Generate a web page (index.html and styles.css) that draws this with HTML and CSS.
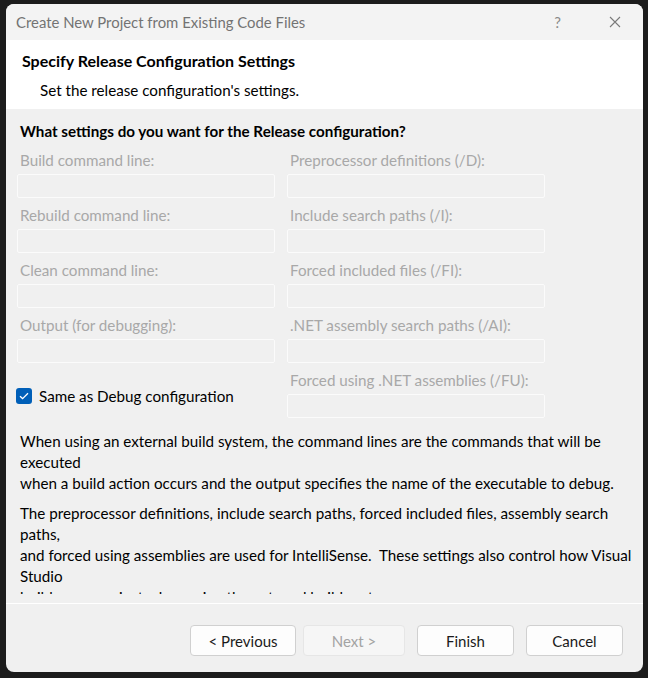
FILE: index.html
```html
<!DOCTYPE html>
<html>
<head>
<meta charset="utf-8">
<link rel="stylesheet" href="styles.css">
</head>
<body>
<div class="window">
  <div class="titlebar">
    <span class="title">Create New Project from Existing Code Files</span>
    <span class="help">?</span>
    <svg class="close" width="12" height="12" viewBox="0 0 12 12"><path d="M1 1L11 11M11 1L1 11" stroke="#7a7a7a" stroke-width="1.1" fill="none"/></svg>
  </div>
  <div class="header">
    <div class="h-title">Specify Release Configuration Settings</div>
    <div class="h-sub">Set the release configuration's settings.</div>
  </div>
  <div class="body">
    <div class="question">What settings do you want for the Release configuration?</div>
    <div class="grid">
      <div class="field"><div class="label">Build command line:</div><div class="input"></div></div>
      <div class="field"><div class="label">Preprocessor definitions (/D):</div><div class="input"></div></div>
      <div class="field"><div class="label">Rebuild command line:</div><div class="input"></div></div>
      <div class="field"><div class="label">Include search paths (/I):</div><div class="input"></div></div>
      <div class="field"><div class="label">Clean command line:</div><div class="input"></div></div>
      <div class="field"><div class="label">Forced included files (/FI):</div><div class="input"></div></div>
      <div class="field"><div class="label">Output (for debugging):</div><div class="input"></div></div>
      <div class="field"><div class="label">.NET assembly search paths (/AI):</div><div class="input"></div></div>
      <div class="check-cell">
        <span class="checkbox"><svg width="10" height="8" viewBox="0 0 10 8"><path d="M1 4.2L3.6 6.6L9 1.2" stroke="#fff" stroke-width="1.3" fill="none"/></svg></span>
        <span class="check-label">Same as Debug configuration</span>
      </div>
      <div class="field"><div class="label">Forced using .NET assemblies (/FU):</div><div class="input"></div></div>
    </div>
    <p class="para">When using an external build system, the command lines are the commands that will be<br>executed<br>when a build action occurs and the output specifies the name of the executable to debug.</p>
    <p class="para">The preprocessor definitions, include search paths, forced included files, assembly search<br>paths,<br>and forced using assemblies are used for IntelliSense.&nbsp; These settings also control how Visual<br>Studio<br>builds your project when using the external build system.</p>
  </div>
  <div class="separator"></div>
  <div class="footer">
    <button class="btn btn-prev">&lt; Previous</button>
    <button class="btn btn-next" disabled>Next &gt;</button>
    <button class="btn btn-finish">Finish</button>
    <button class="btn btn-cancel">Cancel</button>
  </div>
</div>
</body>
</html>
```

FILE: styles.css
```css
html, body {
  margin: 0;
  padding: 0;
  background: #1c1c1c;
}
body {
  padding: 4px 0 0 6px;
  font-family: Lato, "Open Sans", sans-serif;
  font-size: 15.2px;
  color: #000;
}
.window {
  width: 637px;
  height: 668px;
  background: #f0f0f0;
  border-radius: 8px;
  overflow: hidden;
  display: flex;
  flex-direction: column;
}
.titlebar {
  height: 36px;
  flex: none;
  background: #f3f3f3;
  display: flex;
  align-items: center;
  padding-left: 10px;
}
.title {
  color: #737373;
  font-size: 14.9px;
  flex: 1;
}
.help {
  color: #8a8a8a;
  font-size: 15px;
  margin-right: 48px;
}
.close {
  margin-right: 22px;
}
.header {
  height: 69px;
  flex: none;
  background: #fff;
  box-sizing: border-box;
  padding: 10px 0 0 16px;
}
.h-title {
  font-weight: bold;
  font-size: 16px;
  line-height: 22px;
}
.h-sub {
  margin-top: 8px;
  padding-left: 18px;
  line-height: 20px;
}
.body {
  height: 485px;
  flex: none;
  overflow: hidden;
  box-sizing: border-box;
  padding: 12px 0 0 11px;
}
.question {
  font-weight: bold;
  line-height: 20px;
  padding-left: 3px;
}
.grid {
  display: grid;
  grid-template-columns: 258px 258px;
  column-gap: 12px;
  row-gap: 7px;
  margin-top: 9px;
}
.label {
  color: #a8a8a8;
  line-height: 20px;
  height: 20px;
  padding-left: 3px;
  white-space: nowrap;
}
.input {
  height: 24px;
  margin-top: 4px;
  box-sizing: border-box;
  border: 1px solid #fbfbfb;
  border-radius: 2px;
  background: #f0f0f0;
}
.check-cell {
  display: flex;
  align-items: center;
  padding-top: 18px;
  align-self: start;
  margin-left: -1px;
}
.checkbox {
  width: 16px;
  height: 16px;
  border-radius: 3px;
  background: #005fb8;
  display: flex;
  align-items: center;
  justify-content: center;
  flex: none;
}
.check-label {
  margin-left: 7px;
  line-height: 16px;
}
.para {
  margin: 13px 0 0 0;
  padding-left: 3px;
  line-height: 21px;
  white-space: nowrap;
}
.para + .para {
  margin-top: 9px;
}
.separator {
  flex: none;
  height: 1px;
  margin-top: 9px;
  background: #fff;
}
.footer {
  flex: 1;
  display: flex;
  justify-content: flex-end;
  align-items: flex-start;
  padding: 21px 20px 0 0;
}
.btn {
  height: 31px;
  font-family: inherit;
  font-size: 15px;
  background: #fdfdfd;
  border: 1px solid #d0d0d0;
  border-radius: 4px;
  color: #1a1a1a;
  padding: 0;
}
.btn-prev { width: 106px; }
.btn-next {
  width: 102px;
  margin-left: 7px;
  background: #f6f6f6;
  border-color: #e6e6e6;
  color: #a3a3a3;
}
.btn-finish { width: 97px; margin-left: 12px; }
.btn-cancel { width: 97px; margin-left: 12px; }
```
